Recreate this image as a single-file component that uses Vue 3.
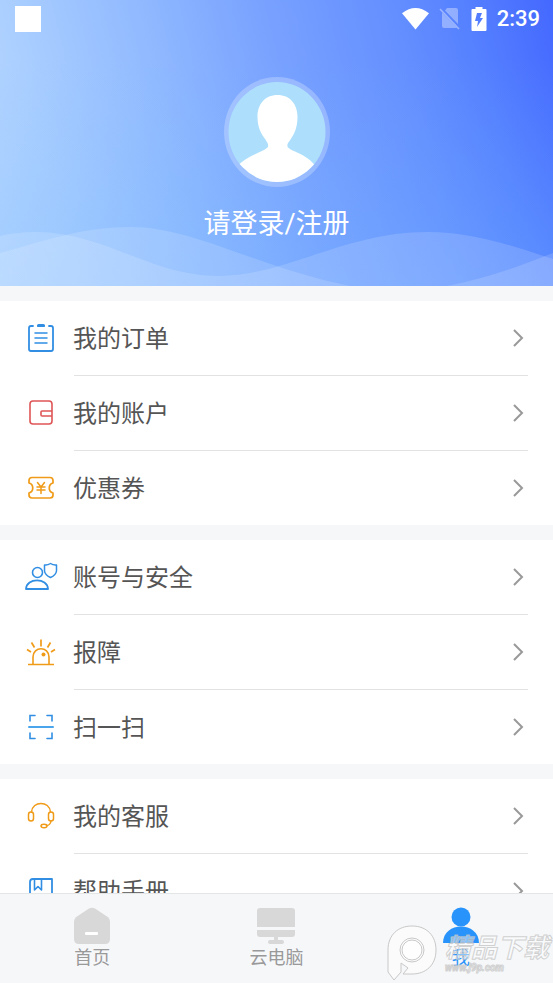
<script setup>
import { ref } from 'vue'

const groups = [
  [
    { icon: 'order', label: '我的订单' },
    { icon: 'wallet', label: '我的账户' },
    { icon: 'coupon', label: '优惠券' },
  ],
  [
    { icon: 'security', label: '账号与安全' },
    { icon: 'alarm', label: '报障' },
    { icon: 'scan', label: '扫一扫' },
  ],
  [
    { icon: 'service', label: '我的客服' },
    { icon: 'manual', label: '帮助手册' },
  ],
]

const tabs = [
  { id: 'home', label: '首页' },
  { id: 'cloud', label: '云电脑' },
  { id: 'me', label: '我' },
]
const active = ref('me')
</script>

<template>
  <div class="page">
    <header class="hero">
      <svg class="waves" viewBox="0 0 553 60" preserveAspectRatio="none" aria-hidden="true">
        <path d="M0 10C12 7 24 6 35 6C105 6 150 50 219 50C285 50 345 6 427 6C475 6 515 21 553 33V60H0Z" />
        <path d="M0 27C42 16 80 1 130 1C195 1 255 41 350 60H0Z" />
        <path d="M447 60C485 53 520 40 553 27V60Z" />
      </svg>

      <div class="status">
        <span class="notice"></span>
        <div class="indicators">
          <svg class="wifi" viewBox="0 0 28 24" aria-hidden="true">
            <path d="M0 6Q14 -5 28 6L14 23Z" fill="#fff" />
          </svg>
          <svg class="sim" viewBox="0 0 22 24" aria-hidden="true">
            <path d="M8 1H17Q19 1 19 3V17L6 3.500ZM3 5.500L18 21H5Q3 21 3 19Z" fill="#fff" opacity=".35" />
            <path d="M1 2L20 22" stroke="#fff" stroke-width="1.600" opacity=".4" />
          </svg>
          <svg class="battery" viewBox="0 0 16 24" aria-hidden="true">
            <path fill="#fff" fill-rule="evenodd" d="M4.500 0H11.500V2H14.500Q15.500 2 15.500 3V23Q15.500 24 14.500 24H1.500Q.5 24 .5 23V3Q.5 2 1.500 2H4.500ZM6 6L4 14H7L6 20L12 11H9L11 6Z" />
          </svg>
          <span class="time">2:39</span>
        </div>
      </div>

      <a class="login" href="#login">
        <svg class="avatar" viewBox="0 0 106 110" aria-hidden="true">
          <defs>
            <clipPath id="face"><ellipse cx="53" cy="55" rx="48.500" ry="50" /></clipPath>
          </defs>
          <ellipse cx="53" cy="55" rx="53" ry="55" fill="#fff" opacity=".25" />
          <g clip-path="url(#face)">
            <rect width="106" height="110" fill="#addffc" />
            <path fill="#fff" d="M53.500 18C66 18 73.500 27 73.500 40C73.500 50 70.500 57 66.500 62.500C64 66 63 67 63.500 69.500C64.500 74 83 76 92 90V110H13V90C22 78 43 74 44 69.500C44.500 67 43.500 66 41.500 62.500C37 57 33.500 50 33.500 40C33.500 27 41 18 53.500 18Z" />
          </g>
        </svg>
        <span class="login-text">请登录/注册</span>
      </a>
    </header>

    <main class="content">
      <ul v-for="(group, g) in groups" :key="g" class="group">
        <li v-for="item in group" :key="item.icon">
          <a class="row" :href="'#' + item.icon">
            <svg class="icon" viewBox="0 0 34 34" fill="none" stroke-width="1.800" stroke-linecap="round" stroke-linejoin="round" aria-hidden="true">
              <g v-if="item.icon === 'order'" stroke="#318ee3">
                <path d="M9 5H7Q5 5 5 7V28Q5 30 7 30H27Q29 30 29 28V7Q29 5 27 5H25M14 5H20" />
                <path d="M14.500 4.500H19.500" stroke-width="3" />
                <path d="M11 12H23M11 17H23M11 22H23" stroke-width="1.500" />
              </g>
              <g v-else-if="item.icon === 'wallet'" stroke="#df5557" stroke-width="1.600">
                <path d="M28 15V8Q28 5 25 5H9Q6 5 6 8V25Q6 28 9 28H25Q28 28 28 25V15H18Q17 15 17 16V19Q17 20 18 20H28" />
              </g>
              <g v-else-if="item.icon === 'coupon'" stroke="#f09b18" stroke-width="1.700">
                <path d="M8 6.500H26Q29 6.500 29 9.500V12C24 13.500 24 20.500 29 22V24Q29 27 26 27H8Q5 27 5 24V22C10 20.500 10 13.500 5 12V9.500Q5 6.500 8 6.500Z" />
                <path d="M13.500 11.500L17 16L20.500 11.500M17 16V22.500M13 16H21M13 19H21" stroke-width="1.500" />
              </g>
              <g v-else-if="item.icon === 'security'" stroke="#318ee3">
                <circle cx="13.500" cy="12.500" r="5" stroke-width="1.600" />
                <path d="M2 29C2.500 17.500 23.500 17.500 24 29Z" />
                <path d="M26.500 3.500Q29.500 5.500 32.500 5V11Q32 15 26.500 17.500Q21 15 20.500 11V5Q23.500 5.500 26.500 3.500Z" stroke-width="1.500" />
              </g>
              <g v-else-if="item.icon === 'alarm'" stroke="#f09b18" stroke-linecap="butt">
                <path d="M4 29.500H30M9 29V22C9 11 25 11 25 22V29" stroke-width="1.600" />
                <path d="M17 4.500V11.500M7.500 7.500L10.500 12.500M26.500 7.500L23.500 12.500M3 14.500L7 17M31 14.500L27 17" stroke-width="1.700" />
                <circle cx="19.500" cy="19.500" r="2" fill="#f09b18" stroke="none" />
              </g>
              <g v-else-if="item.icon === 'scan'" stroke="#318ee3" stroke-width="1.600" stroke-linejoin="miter">
                <path d="M11 5.500H6V11M23 5.500H28V11M11 28.500H6V23M23 28.500H28V23" />
                <path d="M5 17H29" stroke="#4ba5ec" stroke-width="2" />
              </g>
              <g v-else-if="item.icon === 'service'" stroke="#f09b18" stroke-width="1.500">
                <path d="M7.500 13C8.500 1.500 25.500 1.500 26.500 13" />
                <rect x="4.500" y="13" width="5" height="9" rx="2.500" />
                <rect x="24.500" y="13" width="5" height="9" rx="2.500" />
                <path d="M27 22C26.500 25 25 26.500 22.500 26.500" />
                <ellipse cx="20" cy="27" rx="3" ry="1.700" />
              </g>
              <g v-else stroke="#318ee3">
                <path d="M28 5H9Q6 5 6 8V26Q6 29 9 29H28Z" />
                <path d="M10.500 5V16L14 12.500L17.500 16V5" stroke-width="1.600" />
              </g>
            </svg>
            <span class="label">{{ item.label }}</span>
            <svg class="chevron" viewBox="0 0 12 20" aria-hidden="true">
              <path d="M2 2L10 10L2 18" fill="none" stroke="#999" stroke-width="2" />
            </svg>
          </a>
        </li>
      </ul>
    </main>

    <nav class="tabbar">
      <button v-for="tab in tabs" :key="tab.id" type="button" class="tab" :class="{ active: active === tab.id }" @click="active = tab.id">
        <svg class="tab-icon" viewBox="0 0 38 38" fill="currentColor" aria-hidden="true">
          <g v-if="tab.id === 'home'">
            <path d="M16 1.500Q19 0 22 1.500L34 9.500Q37 11.500 37 15V32Q37 37 32 37H6Q1 37 1 32V15Q1 11.500 4 9.500Z" />
            <rect x="12" y="25" width="13" height="3" rx="1" fill="#fff" />
          </g>
          <g v-else-if="tab.id === 'cloud'">
            <path d="M3 1H35Q38 1 38 4V20H0V4Q0 1 3 1ZM0 23H38V27Q38 30 35 30H21V33H25Q27 33 27 35Q27 37 25 37H13Q11 37 11 35Q11 33 13 33H17V30H3Q0 30 0 27Z" />
          </g>
          <g v-else>
            <circle cx="19" cy="10" r="9.500" />
            <path d="M1 36C1 14 37 14 37 36Z" />
          </g>
        </svg>
        <span>{{ tab.label }}</span>
      </button>
    </nav>

    <div class="brand">
      <svg class="brand-mark" viewBox="0 0 50 58" aria-hidden="true">
        <path d="M1 47V25C1 10 11 1 25 1C40 1 49 11 49 25C49 40 39 49 25 49H16L21 43L14 38V47L7 55Z" />
        <circle cx="25" cy="25" r="12" />
        <circle cx="25" cy="25" r="10" />
      </svg>
      <div class="brand-words">
        <span class="brand-name">精品下载</span>
        <span class="brand-url">www.j9p.com</span>
      </div>
    </div>
  </div>
</template>

<style>
body {
  margin: 0;
}
</style>

<style scoped>
.page {
  position: relative;
  display: flex;
  flex-direction: column;
  height: 100vh;
  overflow: hidden;
  background: #f6f7f9;
  color: #555;
  font-family: Roboto, "Noto Sans CJK SC", sans-serif;
}

a {
  color: inherit;
  text-decoration: none;
}

.hero {
  position: relative;
  flex: none;
  padding-bottom: 42px;
  background:
    linear-gradient(to bottom, rgba(110, 175, 255, 0) 20%, rgba(110, 180, 255, 0.3) 100%),
    linear-gradient(76deg, #b8d8ff 0%, #abcfff 12%, #92bbff 32%, #7aa3ff 52%, #648fff 74%, #5580ff 86%, #4468ff 100%);
}

.waves {
  position: absolute;
  left: 0;
  bottom: 0;
  width: 100%;
  height: 60px;
  fill: #fff;
  fill-opacity: 0.15;
}

.status {
  display: flex;
  align-items: center;
  justify-content: space-between;
  height: 37px;
  padding: 0 13px 0 15px;
}

.notice {
  width: 26px;
  height: 26px;
  background: #fff;
}

.indicators {
  display: flex;
  align-items: center;
  gap: 10px;
}

.wifi {
  width: 27px;
  height: 24px;
}

.sim {
  width: 22px;
  height: 24px;
}

.battery {
  width: 16px;
  height: 24px;
}

.time {
  color: #fff;
  font-size: 22px;
  font-weight: 500;
  line-height: 24px;
}

.login {
  position: relative;
  display: flex;
  flex-direction: column;
  align-items: center;
  gap: 17px;
  margin-top: 40px;
}

.avatar {
  width: 106px;
  height: 110px;
}

.login-text {
  color: #fff;
  font-size: 27px;
  line-height: 40px;
}

.content {
  flex: 1;
  min-height: 0;
  display: flex;
  flex-direction: column;
  gap: 15px;
  padding-top: 15px;
  overflow: hidden;
}

.group {
  flex: none;
  margin: 0;
  padding: 0;
  list-style: none;
  background: #fff;
}

.row {
  display: flex;
  align-items: center;
  height: 74px;
  padding: 0 29px 0 24px;
}

.group li + li::before {
  content: "";
  display: block;
  height: 1px;
  margin: 0 25px 0 74px;
  background: #e2e2e2;
}

.icon {
  flex: none;
  width: 34px;
  height: 34px;
  margin-right: 15px;
}

.label {
  flex: 1;
  padding-top: 2px;
  font-size: 24px;
  line-height: 36px;
}

.chevron {
  width: 12px;
  height: 20px;
}

.tabbar {
  flex: none;
  display: flex;
  height: 89px;
  border-top: 1px solid #e4e5e7;
  background: #f6f7f9;
}

.tab {
  flex: 1;
  display: flex;
  flex-direction: column;
  align-items: center;
  gap: 1px;
  padding: 13px 0 0;
  border: 0;
  background: none;
  color: #d8d8d8;
  font-family: inherit;
  font-size: 18px;
  line-height: 24px;
  cursor: pointer;
}

.tab-icon {
  width: 38px;
  height: 38px;
}

.tab span {
  color: #999;
}

.tab.active,
.tab.active span {
  color: #2894fb;
}

.brand {
  position: absolute;
  right: 4px;
  bottom: 0;
  display: flex;
  gap: 8px;
  pointer-events: none;
}

.brand-mark {
  width: 50px;
  height: 58px;
  fill: rgba(255, 255, 255, 0.5);
  stroke: #c8c8c8;
  stroke-width: 1;
}

.brand-words {
  display: flex;
  flex-direction: column;
  padding-top: 8px;
  color: rgba(255, 255, 255, 0.45);
  font-style: italic;
  font-weight: 700;
  -webkit-text-stroke: 1px rgba(195, 195, 195, 0.75);
}

.brand-name {
  font-size: 26px;
  line-height: 30px;
}

.brand-url {
  font-size: 10px;
  line-height: 10px;
}
</style>
